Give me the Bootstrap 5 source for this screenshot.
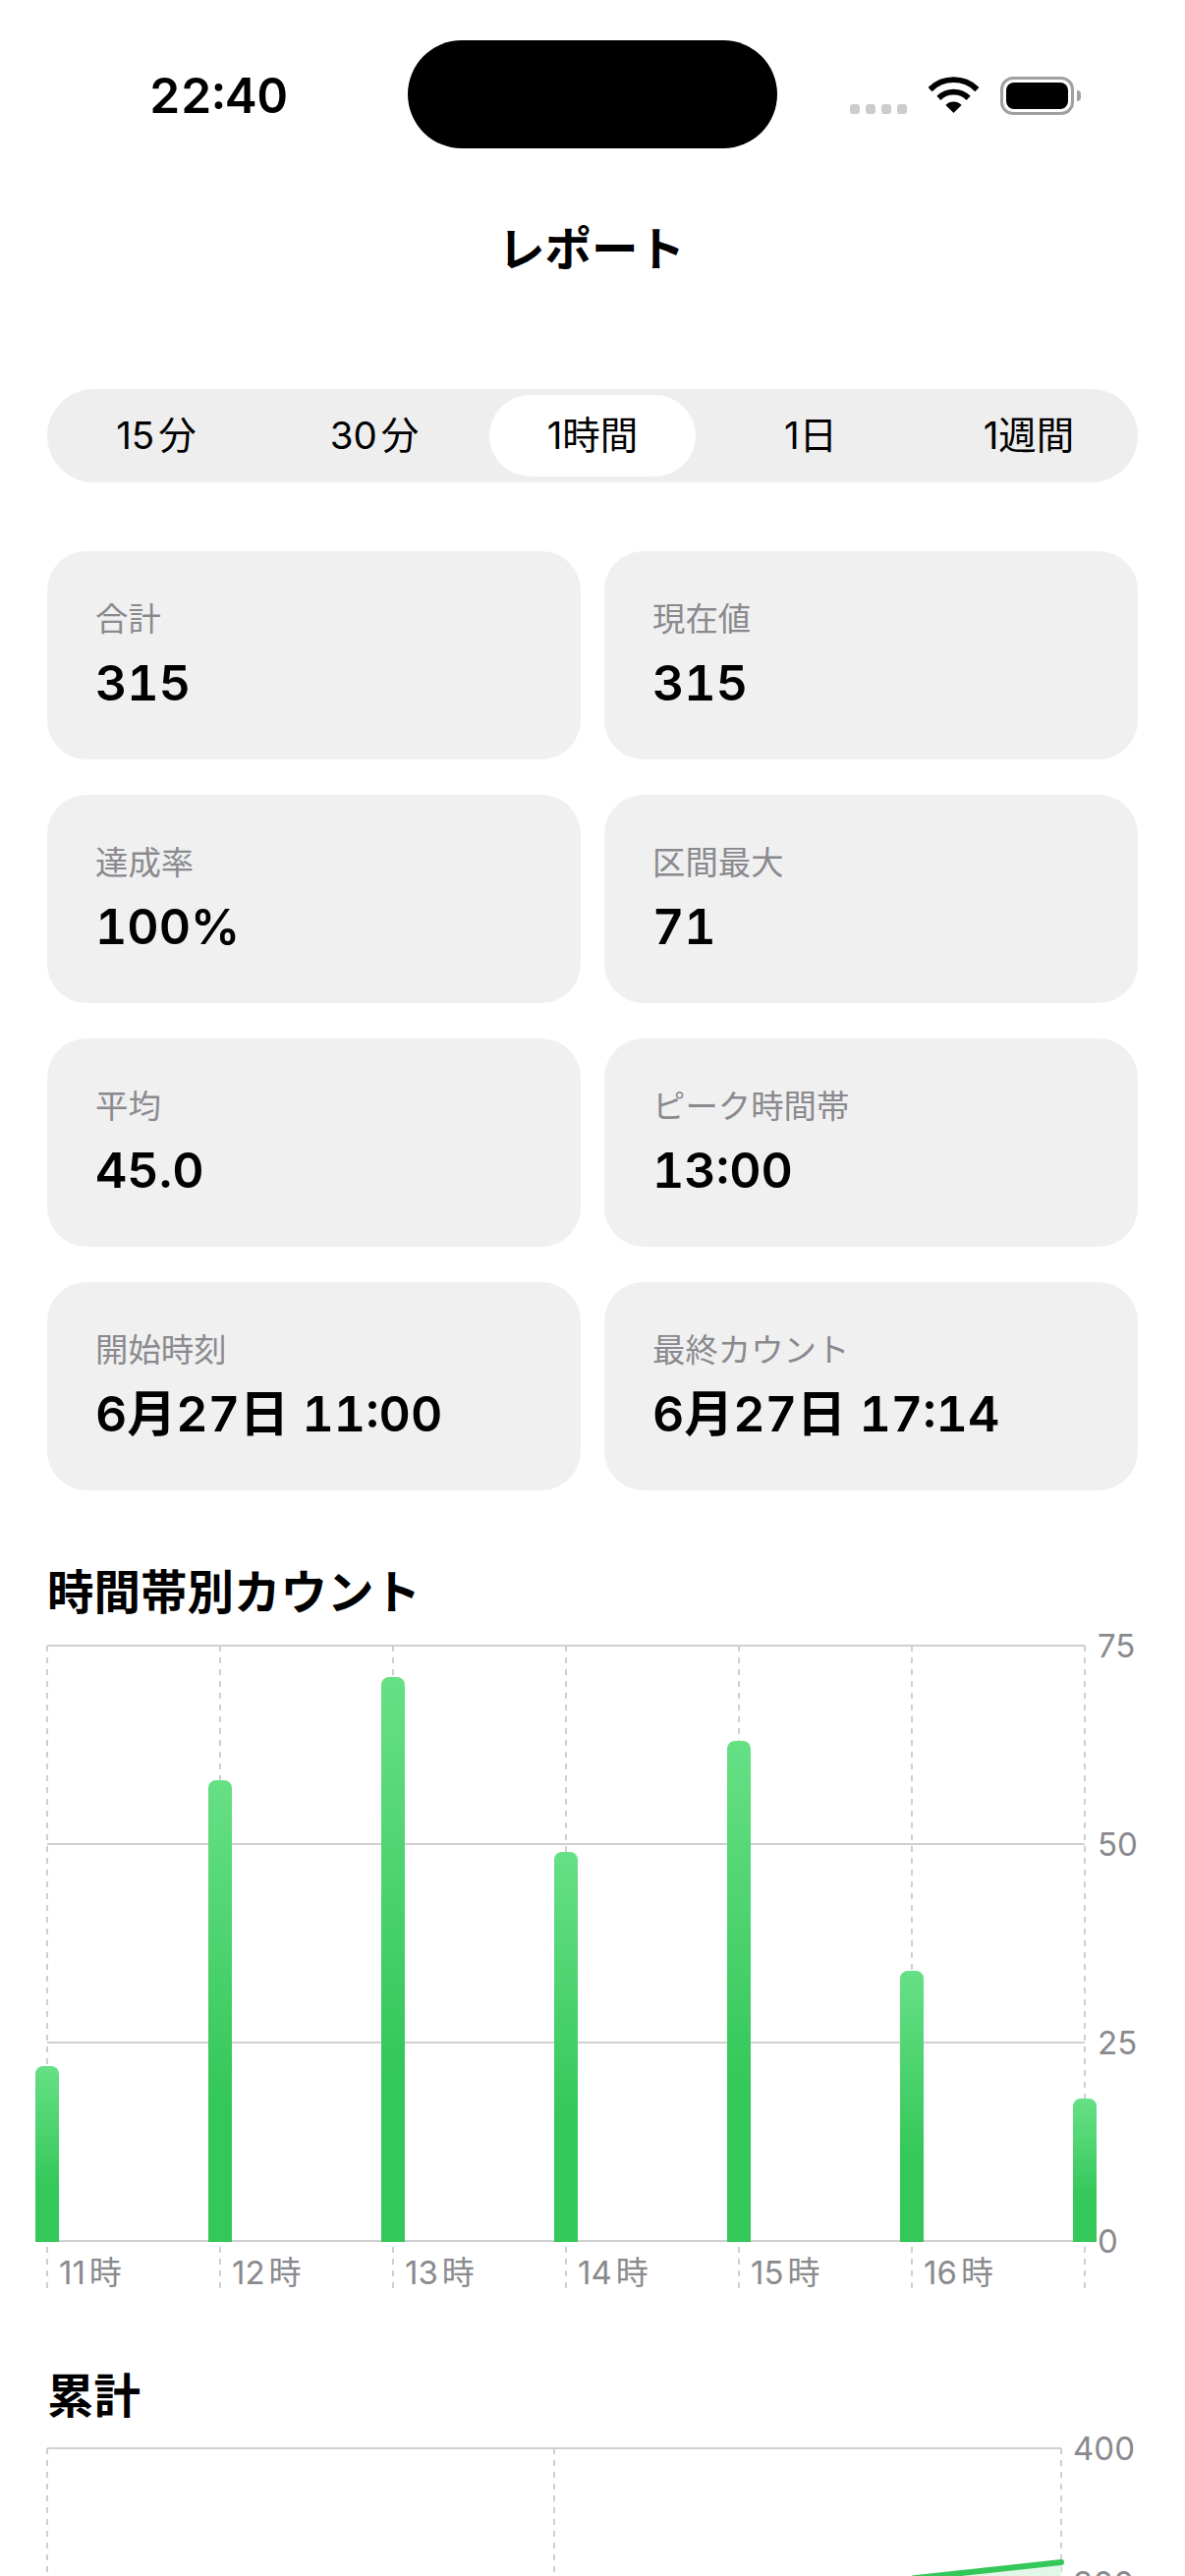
<!doctype html>
<html lang="ja">
<head>
<meta charset="utf-8">
<title>レポート</title>
<link href="https://cdn.jsdelivr.net/npm/bootstrap@5.3.0/dist/css/bootstrap.min.css" rel="stylesheet">
<style>
html,body{height:2622px;overflow:hidden;background:#fff}
body{font-family:"Inter","Noto Sans CJK JP",sans-serif;color:#000}
.app-page{width:1206px;height:2622px;overflow:hidden}
.status-row{height:152px}
.status-left{width:415px;padding-left:30px;padding-top:61px;height:152px;text-align:center;font-size:49.5px;font-weight:600;line-height:72px;font-variant-numeric:tabular-nums}
.island{width:376px;height:110px;margin-top:41px;border-radius:55px;background:#000}
.status-right{width:415px;padding-left:74px;padding-top:78px}
.sig-dots{gap:6px;margin-top:28px;margin-right:22px}
.sig-dot{width:10px;height:10px;border-radius:3px;background:#ccc}
.batt{width:75px;height:39px;border:3px solid #a0a0a0;border-radius:13px;padding:3px;margin-left:22px}
.batt-fill{background:#000;border-radius:8px;width:100%;height:100%}
.batt-nub{width:4px;height:11px;margin-left:3px;margin-top:14px;background:#a0a0a0;border-radius:0 4px 4px 0}
.page-title{margin-top:67px;height:70px;line-height:70px;font-size:47.5px;font-weight:600;text-align:center;padding-right:2px}
.seg{margin:107px 48px 0;height:95px;border-radius:47.5px;background:#eee}
.seg-item{width:222px;height:95px;padding:6px;font-size:38.5px;line-height:83px;text-align:center}
.seg-in{height:83px;border-radius:41.5px}
.seg-in.on{background:#fff}
.gapn{margin-left:4px}
.stats{padding:70px 48px 0}
.stats-row{--bs-gutter-x:24px;--bs-gutter-y:36px}
.stat-box{height:212px;background:#f0f0f1;border-radius:40px;padding:47px 0 0 49px}
.stat-label{font-size:33.4px;line-height:44px;color:#8a8a8e}
.stat-val{font-size:50px;line-height:66px;margin-top:10px;font-weight:600;font-variant-numeric:tabular-nums}
.sec-h{margin:0;padding-left:48px;height:60px;line-height:60px;font-size:47.5px;font-weight:600}
.sec-a{margin-top:74px}
.sec-b{margin-top:58px}
.plot{display:block;width:1206px}
.grid-h{stroke:#d0d0d0;stroke-width:2}
.grid-v{stroke:#cfcfcf;stroke-width:2;stroke-dasharray:6 6}
.ax-t{font-family:"Inter","Noto Sans CJK JP",sans-serif;font-size:33px;fill:#8a8a8e}
</style>
</head>
<body>
<div class="app-page">
  <div class="status-row d-flex">
    <div class="status-left">22:40</div>
    <div class="island flex-shrink-0"></div>
    <div class="status-right d-flex align-items-start">
      <div class="sig-dots d-flex"><span class="sig-dot"></span><span class="sig-dot"></span><span class="sig-dot"></span><span class="sig-dot"></span></div>
      <svg width="51" height="37" viewBox="0 0 51 37" class="flex-shrink-0 d-block mt-0" aria-hidden="true">
        <path d="M1.6 13.1A33.8 33.8 0 0 1 49.4 13.1" fill="none" stroke="#000" stroke-width="5.8"/>
        <path d="M10.4 21.9A21.4 21.4 0 0 1 40.6 21.9" fill="none" stroke="#000" stroke-width="5.8"/>
        <path d="M25.5 37L17.4 28.9A11.5 11.5 0 0 1 33.6 28.9Z" fill="#000"/>
      </svg>
      <div class="batt flex-shrink-0"><div class="batt-fill"></div></div>
      <div class="batt-nub flex-shrink-0"></div>
    </div>
  </div>

  <div class="page-title">レポート</div>

  <div class="seg d-flex">
    <div class="seg-item"><div class="seg-in">15<span class="gapn">分</span></div></div>
    <div class="seg-item"><div class="seg-in">30<span class="gapn">分</span></div></div>
    <div class="seg-item"><div class="seg-in on">1時間</div></div>
    <div class="seg-item"><div class="seg-in">1日</div></div>
    <div class="seg-item"><div class="seg-in">1週間</div></div>
  </div>

  <div class="stats">
    <div class="row stats-row">
      <div class="col-6"><div class="stat-box"><div class="stat-label">合計</div><div class="stat-val">315</div></div></div>
      <div class="col-6"><div class="stat-box"><div class="stat-label">現在値</div><div class="stat-val">315</div></div></div>
      <div class="col-6"><div class="stat-box"><div class="stat-label">達成率</div><div class="stat-val">100%</div></div></div>
      <div class="col-6"><div class="stat-box"><div class="stat-label">区間最大</div><div class="stat-val">71</div></div></div>
      <div class="col-6"><div class="stat-box"><div class="stat-label">平均</div><div class="stat-val">45.0</div></div></div>
      <div class="col-6"><div class="stat-box"><div class="stat-label">ピーク時間帯</div><div class="stat-val">13:00</div></div></div>
      <div class="col-6"><div class="stat-box"><div class="stat-label">開始時刻</div><div class="stat-val">6月27日 11:00</div></div></div>
      <div class="col-6"><div class="stat-box"><div class="stat-label">最終カウント</div><div class="stat-val">6月27日 17:14</div></div></div>
    </div>
  </div>

  <h2 class="sec-h sec-a">時間帯別カウント</h2>
  <svg class="plot" height="700" viewBox="0 1651 1206 700">
    <defs>
      <linearGradient id="barFill" x1="0" y1="0" x2="0" y2="1">
        <stop offset="0" stop-color="#66e085"/>
        <stop offset=".7" stop-color="#34c759"/>
        <stop offset="1" stop-color="#34c759"/>
      </linearGradient>
    </defs>
    <line class="grid-h" x1="48" x2="1104" y1="1675" y2="1675"/>
    <line class="grid-h" x1="48" x2="1104" y1="1877" y2="1877"/>
    <line class="grid-h" x1="48" x2="1104" y1="2079" y2="2079"/>
    <line class="grid-h" x1="48" x2="1104" y1="2281" y2="2281"/>
    <g>
      <line class="grid-v" x1="48" x2="48" y1="1675" y2="2329"/>
      <line class="grid-v" x1="224" x2="224" y1="1675" y2="2329"/>
      <line class="grid-v" x1="400" x2="400" y1="1675" y2="2329"/>
      <line class="grid-v" x1="576" x2="576" y1="1675" y2="2329"/>
      <line class="grid-v" x1="752" x2="752" y1="1675" y2="2329"/>
      <line class="grid-v" x1="928" x2="928" y1="1675" y2="2329"/>
      <line class="grid-v" x1="1104" x2="1104" y1="1675" y2="2329"/>
    </g>
    <g fill="url(#barFill)">
      <path d="M36 2282V2111a8 8 0 0 1 8-8h8a8 8 0 0 1 8 8V2282Z"/>
      <path d="M212 2282V1820a8 8 0 0 1 8-8h8a8 8 0 0 1 8 8V2282Z"/>
      <path d="M388 2282V1715a8 8 0 0 1 8-8h8a8 8 0 0 1 8 8V2282Z"/>
      <path d="M564 2282V1893a8 8 0 0 1 8-8h8a8 8 0 0 1 8 8V2282Z"/>
      <path d="M740 2282V1780a8 8 0 0 1 8-8h8a8 8 0 0 1 8 8V2282Z"/>
      <path d="M916 2282V2014a8 8 0 0 1 8-8h8a8 8 0 0 1 8 8V2282Z"/>
      <path d="M1092 2282V2144a8 8 0 0 1 8-8h8a8 8 0 0 1 8 8V2282Z"/>
    </g>
    <text class="ax-t" x="1117" y="1687">75</text>
    <text class="ax-t" x="1117" y="1889">50</text>
    <text class="ax-t" x="1117" y="2091">25</text>
    <text class="ax-t" x="1117" y="2293">0</text>
    <text class="ax-t" x="60" y="2325">11<tspan dx="4">時</tspan></text>
    <text class="ax-t" x="236" y="2325">12<tspan dx="4">時</tspan></text>
    <text class="ax-t" x="412" y="2325">13<tspan dx="4">時</tspan></text>
    <text class="ax-t" x="588" y="2325">14<tspan dx="4">時</tspan></text>
    <text class="ax-t" x="764" y="2325">15<tspan dx="4">時</tspan></text>
    <text class="ax-t" x="940" y="2325">16<tspan dx="4">時</tspan></text>
  </svg>

  <h2 class="sec-h sec-b">累計</h2>
  <svg class="plot" height="153" viewBox="0 2469 1206 153">
    <line class="grid-h" x1="48" x2="1080" y1="2492" y2="2492"/>
    <line class="grid-v" x1="48" x2="48" y1="2492" y2="2640"/>
    <line class="grid-v" x1="564" x2="564" y1="2492" y2="2640"/>
    <line class="grid-v" x1="1080" x2="1080" y1="2492" y2="2640"/>
    <path d="M950 2622L1080 2608V2640H950Z" fill="#e3f7e8"/>
    <path d="M930 2624.2L1080 2608" fill="none" stroke="#34c759" stroke-width="6" stroke-linecap="round"/>
    <text class="ax-t" x="1092" y="2640.5">300</text>
    <text class="ax-t" x="1092" y="2504">400</text>
  </svg>
</div>
<script src="https://cdn.jsdelivr.net/npm/bootstrap@5.3.0/dist/js/bootstrap.bundle.min.js"></script>
</body>
</html>
